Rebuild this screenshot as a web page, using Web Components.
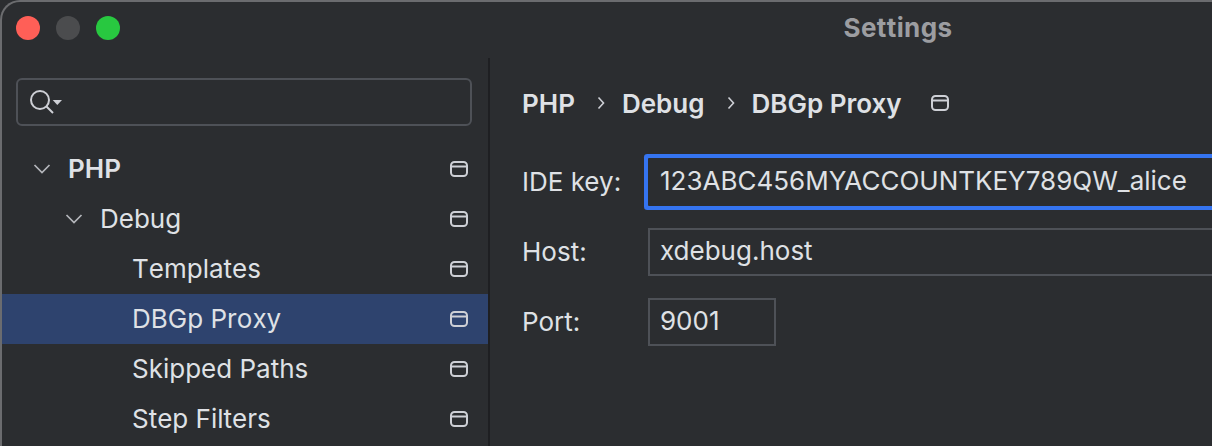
<!DOCTYPE html>
<html>
<head>
<meta charset="utf-8">
<title>Settings</title>
<style>
  html, body { margin: 0; height: 100%; overflow: hidden; background: #2b2d30; }
</style>
</head>
<body>
<settings-window title-text="Settings">
  <search-field slot="sidebar"></search-field>
  <tree-row slot="sidebar" level="0" arrow bold>PHP</tree-row>
  <tree-row slot="sidebar" level="1" arrow>Debug</tree-row>
  <tree-row slot="sidebar" level="2">Templates</tree-row>
  <tree-row slot="sidebar" level="2" selected>DBGp Proxy</tree-row>
  <tree-row slot="sidebar" level="2">Skipped Paths</tree-row>
  <tree-row slot="sidebar" level="2">Step Filters</tree-row>

  <bread-crumbs path="PHP,Debug,DBGp Proxy"></bread-crumbs>
  <form-row label="IDE key:"><text-field focused value="123ABC456MYACCOUNTKEY789QW_alice"></text-field></form-row>
  <form-row label="Host:"><text-field value="xdebug.host"></text-field></form-row>
  <form-row label="Port:"><text-field short value="9001"></text-field></form-row>
</settings-window>

<script>
// small window icon used next to settings that are stored per project
class ProjectIcon extends HTMLElement {
  constructor() {
    super();
    this.attachShadow({ mode: 'open' });
    this.shadowRoot.innerHTML = `
      <style>
        :host { display: block; width: 18px; height: 16px; }
        svg { display: block; }
      </style>
      <svg width="18" height="16" viewBox="0 0 18 16" fill="none" stroke="#ced0d6" stroke-width="2">
        <rect x="1" y="1" width="16" height="14" rx="3.5"/>
        <path d="M1 5.5H17"/>
      </svg>`;
  }
}
customElements.define('project-icon', ProjectIcon);

class SettingsWindow extends HTMLElement {
  constructor() {
    super();
    this.attachShadow({ mode: 'open' });
    this.shadowRoot.innerHTML = `
      <style>
        :host {
          display: block;
          box-sizing: border-box;
          width: 1794px;
          height: 446px;
          overflow: hidden;
          background: #2b2d30;
          color: #dfe1e5;
          font-family: Inter, "Liberation Sans", sans-serif;
          font-size: 26px;
        }
        .frame {
          box-sizing: border-box;
          height: 100%;
          display: flex;
          flex-direction: column;
          border: solid #6b6c6f;
          border-width: 2px 0 0 2px;
          border-top-left-radius: 20px;
        }
        .titlebar {
          position: relative;
          flex: none;
          height: 56px;
          box-sizing: border-box;
          padding-bottom: 6px;
          display: flex;
          align-items: center;
          justify-content: center;
        }
        .lights {
          position: absolute;
          left: 14px;
          top: 14px;
          display: flex;
          gap: 16px;
        }
        .lights i { width: 24px; height: 24px; border-radius: 50%; }
        .title { font-weight: 700; color: #9c9da1; font-size: 26px; letter-spacing: 0.4px; font-kerning: none; }
        .body { flex: 1; display: flex; min-height: 0; }
        .sidebar {
          flex: none;
          width: 486px;
          border-right: 2px solid #1e1f22;
          box-sizing: content-box;
        }
        .content {
          flex: 1;
          padding: 0 0 0 32px;
          min-width: 0;
        }
      </style>
      <div class="frame">
        <div class="titlebar">
          <div class="lights">
            <i style="background:#ff5f57"></i>
            <i style="background:#4b4c4e"></i>
            <i style="background:#28c840"></i>
          </div>
          <div class="title"></div>
        </div>
        <div class="body">
          <div class="sidebar"><slot name="sidebar"></slot></div>
          <div class="content"><slot></slot></div>
        </div>
      </div>`;
  }

  connectedCallback() {
    this.shadowRoot.querySelector('.title').textContent = this.getAttribute('title-text');
  }
}
customElements.define('settings-window', SettingsWindow);

class SearchField extends HTMLElement {
  constructor() {
    super();
    this.attachShadow({ mode: 'open' });
    this.shadowRoot.innerHTML = `
      <style>
        :host { display: block; padding: 20px 16px 18px 14px; }
        .box {
          box-sizing: border-box;
          height: 48px;
          border: 2px solid #4e5157;
          border-radius: 6px;
          display: flex;
          align-items: center;
          padding-left: 11px;
        }
        svg { display: block; }
      </style>
      <div class="box">
        <svg width="34" height="26" viewBox="0 0 34 26" fill="none">
          <circle cx="11" cy="11" r="9" stroke="#ced0d6" stroke-width="2"/>
          <path d="M17.5 17.5L24 24" stroke="#ced0d6" stroke-width="2"/>
          <path d="M23.7 11H33L28.3 16Z" fill="#ced0d6"/>
        </svg>
      </div>`;
  }
}
customElements.define('search-field', SearchField);

class TreeRow extends HTMLElement {
  constructor() {
    super();
    this.attachShadow({ mode: 'open' });
    this.shadowRoot.innerHTML = `
      <style>
        :host {
          display: flex;
          align-items: center;
          height: 50px;
          padding-right: 20px;
          white-space: nowrap;
          font-kerning: none;
        }
        :host([selected]) { background: #2e436e; }
        :host([bold]) { font-weight: 600; }
        .arrow { flex: none; width: 36px; display: flex; justify-content: flex-start; }
        .label { flex: 1; padding-bottom: 2px; }
        svg { display: block; }
      </style>
      <span class="arrow"></span>
      <span class="label"><slot></slot></span>
      <project-icon></project-icon>`;
  }

  connectedCallback() {
    const level = Number(this.getAttribute('level') || 0);
    this.style.paddingLeft = (30 + level * 32) + 'px';
    if (this.hasAttribute('arrow')) {
      this.shadowRoot.querySelector('.arrow').innerHTML =
        '<svg width="20" height="12" viewBox="0 0 20 12" fill="none" stroke="#b4b6bb" stroke-width="1.7"><path d="M2.5 2L10 9.5L17.5 2"/></svg>';
    }
  }
}
customElements.define('tree-row', TreeRow);

class BreadCrumbs extends HTMLElement {
  constructor() {
    super();
    this.attachShadow({ mode: 'open' });
    this.shadowRoot.innerHTML = `
      <style>
        :host {
          display: flex;
          align-items: center;
          height: 46px;
          padding: 22px 0 32px;
          font-weight: 600;
          white-space: nowrap;
        }
        .sep { flex: none; margin: 0 17px 0 22px; display: block; }
        project-icon { margin-left: 29px; }
      </style>
      <span class="path" style="display:flex;align-items:center"></span>
      <project-icon></project-icon>`;
  }

  connectedCallback() {
    const path = this.shadowRoot.querySelector('.path');
    path.innerHTML = this.getAttribute('path').split(',').map(p => `<span>${p}</span>`).join(
      '<svg class="sep" width="8" height="14" viewBox="0 0 8 14" fill="none" stroke="#ced0d6" stroke-width="1.6"><path d="M1.5 1.5L6.5 7L1.5 12.5"/></svg>');
  }
}
customElements.define('bread-crumbs', BreadCrumbs);

class FormRow extends HTMLElement {
  constructor() {
    super();
    this.attachShadow({ mode: 'open' });
    this.shadowRoot.innerHTML = `
      <style>
        :host {
          display: flex;
          align-items: center;
          height: 48px;
          margin-bottom: 22px;
        }
        .label { flex: none; width: 126px; white-space: nowrap; padding-bottom: 2px; }
        .field { flex: 1; min-width: 0; }
      </style>
      <span class="label"></span>
      <div class="field"><slot></slot></div>`;
  }

  connectedCallback() {
    this.shadowRoot.querySelector('.label').textContent = this.getAttribute('label');
  }
}
customElements.define('form-row', FormRow);

class TextField extends HTMLElement {
  constructor() {
    super();
    this.attachShadow({ mode: 'open' });
    this.shadowRoot.innerHTML = `
      <style>
        :host {
          display: block;
          box-sizing: border-box;
          height: 48px;
          border: 2px solid #4e5157;
          line-height: 42px;
          padding-left: 10px;
          white-space: nowrap;
        }
        :host([short]) { width: 128px; }
        :host([focused]) {
          border-color: transparent;
          border-radius: 1px;
          box-shadow: 0 0 0 4px #3574f0;
        }
      </style>
      <span></span>`;
  }

  connectedCallback() {
    this.shadowRoot.querySelector('span').textContent = this.getAttribute('value');
  }
}
customElements.define('text-field', TextField);
</script>
</body>
</html>
